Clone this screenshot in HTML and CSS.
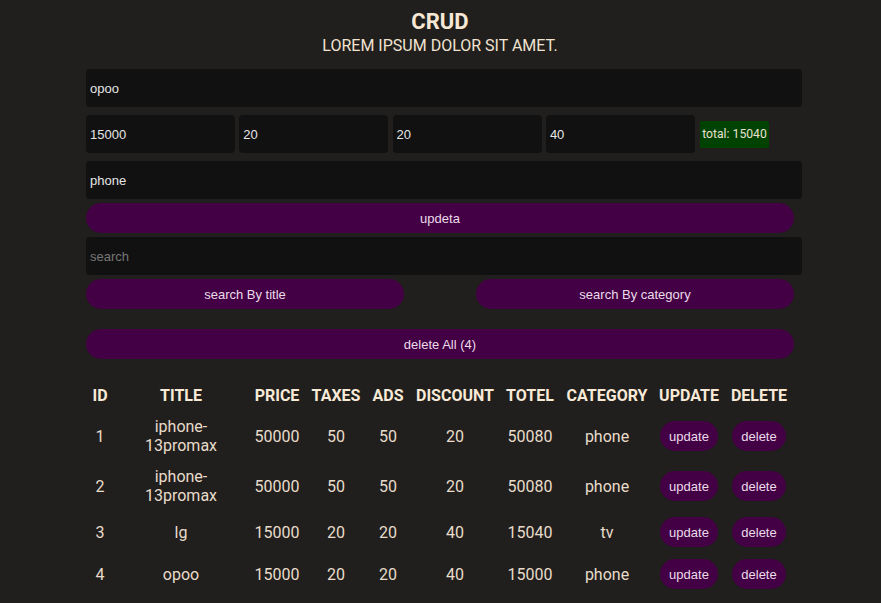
FILE: index.html
```html
<!DOCTYPE html>
<html>
<head>
<meta charset="utf-8">
<link rel="stylesheet" href="styles.css">
</head>
<body>
<div class="crud">
  <header class="head">
    <h1>CRUD</h1>
    <p>LOREM IPSUM DOLOR SIT AMET.</p>
  </header>
  <div class="inputs">
    <input class="field" type="text" value="opoo">
    <div class="price">
      <input class="field small" type="text" value="15000">
      <input class="field small" type="text" value="20">
      <input class="field small" type="text" value="20">
      <input class="field small" type="text" value="40">
      <small class="total">total: 15040</small>
    </div>
    <input class="field" type="text" value="phone">
    <button class="btn wide">updeta</button>
  </div>
  <div class="search">
    <input class="field" type="text" placeholder="search">
    <div class="search-btns">
      <button class="btn half">search By title</button>
      <button class="btn half">search By category</button>
    </div>
  </div>
  <div class="delete-all">
    <button class="btn wide">delete All (4)</button>
  </div>
  <table class="outputs">
    <colgroup>
      <col style="width:28px"><col style="width:134px"><col style="width:58px"><col style="width:60px"><col style="width:44px"><col style="width:90px"><col style="width:60px"><col style="width:94px"><col style="width:70px"><col style="width:70px">
    </colgroup>
    <thead>
      <tr><th>ID</th><th>TITLE</th><th>PRICE</th><th>TAXES</th><th>ADS</th><th>DISCOUNT</th><th>TOTEL</th><th>CATEGORY</th><th>UPDATE</th><th>DELETE</th></tr>
    </thead>
    <tbody>
      <tr><td>1</td><td class="title">iphone-13promax</td><td>50000</td><td>50</td><td>50</td><td>20</td><td>50080</td><td>phone</td><td><button class="btn row">update</button></td><td><button class="btn row">delete</button></td></tr>
      <tr><td>2</td><td class="title">iphone-13promax</td><td>50000</td><td>50</td><td>50</td><td>20</td><td>50080</td><td>phone</td><td><button class="btn row">update</button></td><td><button class="btn row">delete</button></td></tr>
      <tr><td>3</td><td class="title">lg</td><td>15000</td><td>20</td><td>20</td><td>40</td><td>15040</td><td>tv</td><td><button class="btn row">update</button></td><td><button class="btn row">delete</button></td></tr>
      <tr><td>4</td><td class="title">opoo</td><td>15000</td><td>20</td><td>20</td><td>40</td><td>15000</td><td>phone</td><td><button class="btn row">update</button></td><td><button class="btn row">delete</button></td></tr>
    </tbody>
  </table>
</div>
</body>
</html>
```
FILE: styles.css
```css
* { box-sizing: border-box; }
html, body { background: #201f1d; }
body {
  margin: 0;
  padding: 8px 0 0;
  font-family: Roboto, "Liberation Sans", sans-serif;
  color: #f7e8d6;
}
.crud {
  width: 708px;
  margin: 0 auto;
  position: relative;
  left: -0.5px;
}
.head { text-align: center; }
.head h1 {
  margin: 0;
  font-size: 22px;
  line-height: 28px;
  font-weight: 700;
}
.head p {
  margin: 0;
  font-size: 16px;
  line-height: 20px;
  color: #f2e3d1;
}
.inputs { margin-top: 13px; display: flex; flex-direction: column; }
.field {
  display: block;
  width: 716px;
  height: 38px;
  padding: 0 4px;
  border: none;
  outline: none;
  border-radius: 4px;
  background: #111;
  color: #e6e6e6;
  font-family: "Liberation Sans", Arial, sans-serif;
  font-size: 13px;
}
.field::placeholder { color: #777; }
.price {
  display: flex;
  align-items: center;
  gap: 4.3px;
  margin: 8px 0;
}
.field.small { width: 149px; flex: none; }
.total {
  margin-left: 1px;
  background: #004300;
  color: #e8e0d2;
  font-family: Roboto, sans-serif;
  font-size: 12.2px;
  line-height: 27px;
  padding: 0 2px;
  border-radius: 2px;
}
.btn {
  border: none;
  background: #440044;
  color: #eadcea;
  font-family: "Liberation Sans", Arial, sans-serif;
  font-size: 13px;
  height: 30px;
  border-radius: 15px;
  cursor: pointer;
}
.btn.wide { width: 708px; display: block; }
.inputs .btn.wide { margin-top: 4px; }
.search { margin-top: 4px; }
.search-btns {
  display: flex;
  justify-content: space-between;
  margin-top: 4px;
}
.btn.half { width: 318px; }
.delete-all { margin-top: 20px; }
.outputs {
  margin-top: 21px;
  width: 708px;
  table-layout: fixed;
  border-collapse: collapse;
  text-align: center;
  font-size: 16px;
  line-height: 19px;
}
.outputs th {
  padding: 6px 0;
  font-weight: 700;
  color: #f9ead8;
  white-space: nowrap;
}
.outputs td {
  padding: 6px 0;
  color: #e9dccb;
}
.outputs td.title { padding: 6px 24px; }
.btn.row {
  height: 30px;
  padding: 0 9px;
  vertical-align: middle;
}
```
